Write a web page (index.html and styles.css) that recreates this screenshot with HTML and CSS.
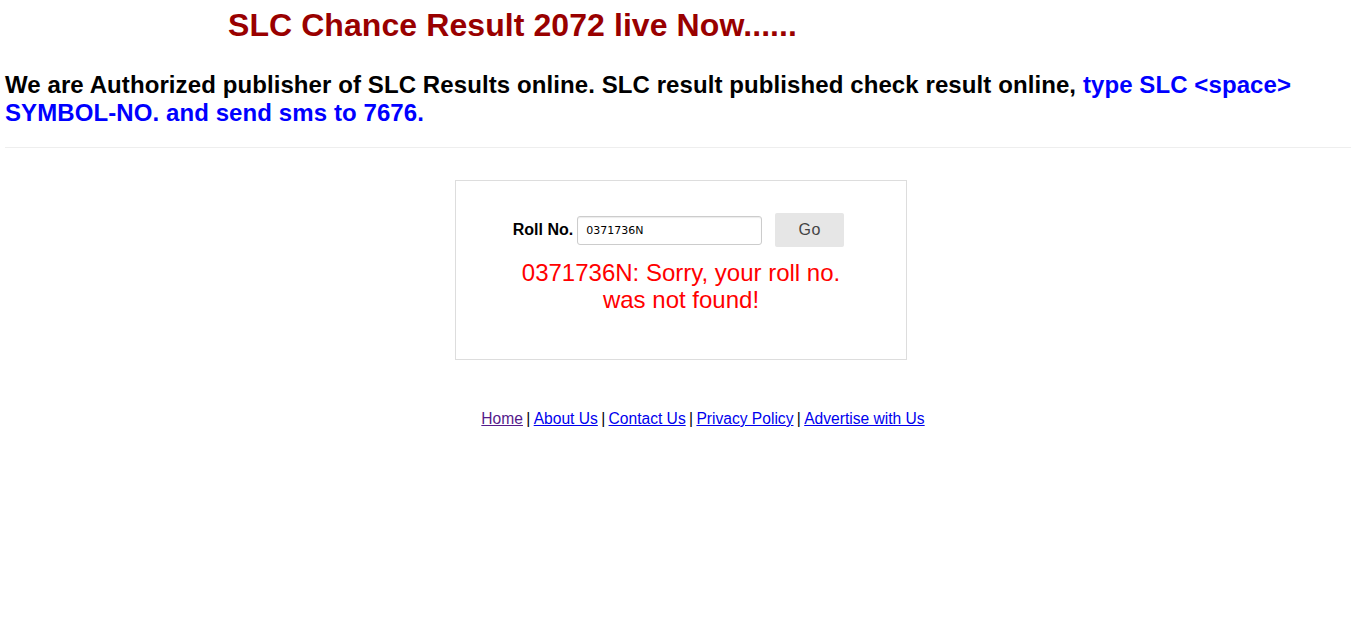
FILE: index.html
```html
<!DOCTYPE html>
<html>
<head>
<meta charset="utf-8">
<title>SLC Chance Result 2072</title>
<link rel="stylesheet" href="styles.css">
</head>
<body>
<div class="head">
  <h1 class="title">SLC Chance Result 2072 live Now......</h1>
</div>
<p class="intro">We are Authorized publisher of SLC Results online. SLC result published check result online, <span class="blue">type SLC &lt;space&gt; SYMBOL-NO. and send sms to 7676.</span></p>
<hr class="rule">
<div class="box">
  <form class="form">
    <label class="label" for="roll">Roll No.</label>
    <input class="input" id="roll" type="text" value="0371736N">
    <button class="btn" type="button">Go</button>
  </form>
  <div class="error">0371736N: Sorry, your roll no.<br>was not found!</div>
</div>
<div class="footer">
  <a class="visited" href="#">Home</a> | <a href="#">About Us</a> | <a href="#">Contact Us</a> | <a href="#">Privacy Policy</a> | <a href="#">Advertise with Us</a>
</div>
</body>
</html>
```
FILE: styles.css
```css
html, body {
  margin: 0;
  padding: 0;
  background: #fff;
}
body {
  padding: 0 0 0 5px;
  font-family: "Liberation Sans", Arial, sans-serif;
  color: #000;
}
.head {
  width: 1015px;
  text-align: center;
}
.title {
  margin: 0;
  padding-top: 7px;
  font-size: 32px;
  line-height: 37px;
  font-weight: bold;
  color: #990000;
  letter-spacing: 0.08px;
}
.intro {
  margin: 27px 0 0 0;
  font-size: 24px;
  line-height: 28px;
  font-weight: bold;
  letter-spacing: 0.09px;
}
.blue {
  color: #0000ff;
}
.rule {
  margin: 20px 0 0 0;
  border: 0;
  border-top: 1px solid #eeeeee;
  height: 0;
}
.box {
  width: 450px;
  height: 178px;
  margin: 32px 0 0 450px;
  border: 1px solid #dddddd;
  text-align: center;
}
.form {
  display: flex;
  justify-content: center;
  align-items: center;
  margin-top: 32px;
  padding-right: 5px;
}
.label {
  font-size: 16px;
  font-weight: bold;
  margin-right: 4px;
}
.input {
  width: 185px;
  height: 29px;
  box-sizing: border-box;
  border: 1px solid #cccccc;
  border-radius: 3px;
  padding: 0 8px;
  font-family: "DejaVu Sans", "Liberation Sans", sans-serif;
  font-size: 11px;
  color: #000;
  box-shadow: inset 0 1px 1px rgba(0,0,0,0.08);
}
.btn {
  margin-left: 13px;
  width: 69px;
  height: 34px;
  border: 0;
  border-radius: 2px;
  background: #e6e6e6;
  color: #444;
  font-family: "Liberation Sans", Arial, sans-serif;
  font-size: 16px;
  font-weight: normal;
  letter-spacing: 0.5px;
}
.error {
  margin-top: 12px;
  font-size: 24px;
  line-height: 27px;
  color: #ff0000;
}
.footer {
  margin-top: 50px;
  padding-left: 50px;
  text-align: center;
  font-size: 15.6px;
  color: #000;
  word-spacing: -1px;
}
.footer a {
  color: #0000ee;
  word-spacing: 0;
}
.footer a.visited {
  color: #551a8b;
}
```
